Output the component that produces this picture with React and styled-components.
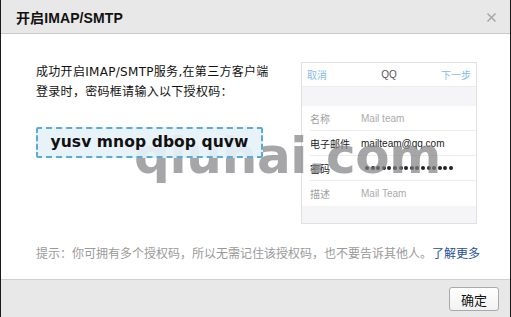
import React from "react";
import styled, { createGlobalStyle } from "styled-components";

const Global = createGlobalStyle`
  html, body { margin: 0; padding: 0; background: #fff; }
  * { box-sizing: border-box; }
  body { font-family: "DejaVu Sans", "Noto Sans CJK SC", sans-serif; }
`;

const Dialog = styled.div`
  position: relative;
  width: 511px;
  height: 317px;
  border-left: 1px solid #1a1a1a;
  border-right: 1px solid #1a1a1a;
  display: flex;
  flex-direction: column;
  background: #fff;
  overflow: hidden;
`;

const Header = styled.div`
  height: 34px;
  flex: none;
  background: #e8e8e8;
  border-bottom: 1px solid #c9c9c9;
  display: flex;
  align-items: center;
  justify-content: space-between;
  padding: 0 13px 0 15px;
`;

const Title = styled.div`
  font-family: "Liberation Sans", "Noto Sans CJK SC", sans-serif;
  font-weight: bold;
  font-size: 14px;
  color: #111;
  letter-spacing: 0.1px;
`;

const Close = styled.button`
  border: 0;
  background: none;
  padding: 0;
  width: 11px;
  height: 11px;
  display: flex;
  margin-top: 1px;
`;

const Body = styled.div`
  flex: 1;
  padding: 28px 32px 0 35px;
  display: flex;
  flex-direction: column;
`;

const Row = styled.div`
  display: flex;
  gap: 38px;
  align-items: flex-start;
`;

const LeftCol = styled.div`
  width: 227px;
  display: flex;
  flex-direction: column;
  gap: 25px;
`;

const Intro = styled.p`
  margin: 0;
  font-size: 12px;
  line-height: 20px;
  letter-spacing: 0.3px;
  color: #111;
  font-family: "DejaVu Sans", "Noto Sans CJK SC", sans-serif;
  white-space: nowrap;
`;

const CodeBox = styled.div`
  position: relative;
  z-index: 2;
  height: 31px;
  border: 2px dashed #58acd6;
  background: rgba(230, 241, 249, 0.92);
  border-radius: 2px;
  display: flex;
  align-items: center;
  justify-content: center;
  font-family: "DejaVu Sans", sans-serif;
  font-weight: bold;
  font-size: 15.5px;
  color: #111;
  letter-spacing: 0.1px;
  padding-bottom: 1px;
`;

const Phone = styled.div`
  width: 176px;
  height: 162px;
  border: 1px solid #e0e0e0;
  background: #f5f5f7;
  display: flex;
  flex-direction: column;
  font-family: "Liberation Sans", "Noto Sans CJK SC", sans-serif;
  font-size: 10px;
`;

const NavBar = styled.div`
  height: 24px;
  background: #fff;
  border-bottom: 1px solid #ececec;
  display: grid;
  grid-template-columns: 1fr auto 1fr;
  align-items: center;
  padding: 0 5px 0 5px;
`;

const NavLink = styled.span`
  color: #86bbe8;
  justify-self: ${(p) => (p.$end ? "end" : "start")};
`;

const NavTitle = styled.span`
  color: #555;
  font-size: 10px;
`;

const Band = styled.div`
  height: ${(p) => p.$h}px;
  background: #f5f5f7;
  flex: none;
`;

const List = styled.div`
  background: #fff;
  display: flex;
  flex-direction: column;
  padding-left: 8px;
`;

const Item = styled.div`
  height: 25px;
  display: flex;
  align-items: center;
  border-bottom: 1px solid #ececec;
  &:last-child { border-bottom: 0; }
`;

const Label = styled.span`
  width: 51px;
  flex: none;
  color: ${(p) => (p.$dark ? "#222" : "#a0a0a0")};
`;

const Value = styled.span`
  color: ${(p) => (p.$dark ? "#222" : "#ababab")};
  font-size: 10px;
`;

const Dots = styled.span`
  display: flex;
  gap: 1.6px;
  margin-left: 4px;
`;

const Dot = styled.i`
  width: 4px;
  height: 4px;
  border-radius: 50%;
  background: #222;
`;

const Tip = styled.p`
  margin: 21px 0 0 0;
  font-size: 12px;
  line-height: 18px;
  color: #9a9a9a;
  white-space: nowrap;
  font-family: "Liberation Sans", "Noto Sans CJK SC", sans-serif;
`;

const More = styled.a`
  color: #1f4f99;
  text-decoration: none;
`;

const Footer = styled.div`
  height: 38px;
  flex: none;
  background: #e8e8e8;
  border-top: 1px solid #cfcfcf;
  display: flex;
  justify-content: flex-end;
  padding: 7px 11px 0 0;
`;

const Button = styled.button`
  width: 50px;
  height: 24px;
  border: 1px solid #a9a9a9;
  border-radius: 3px;
  background: linear-gradient(#ffffff, #f2f2f2);
  font-family: "Liberation Sans", "Noto Sans CJK SC", sans-serif;
  font-size: 13px;
  color: #111;
  padding: 0;
`;

const Watermark = styled.div`
  position: absolute;
  z-index: 1;
  left: 133px;
  top: 131px;
  font-family: "DejaVu Sans", sans-serif;
  font-weight: bold;
  font-size: 50px;
  line-height: 50px;
  letter-spacing: -0.3px;
  color: rgba(128, 128, 132, 0.7);
  pointer-events: none;
  white-space: nowrap;
`;

const rows = [
  { label: "名称", value: "Mail team" },
  { label: "电子邮件", value: "mailteam@qq.com", dark: true },
  { label: "密码", dots: true, dark: true },
  { label: "描述", value: "Mail Team" },
];

export default function App() {
  return (
    <>
      <Global />
      <Dialog>
        <Header>
          <Title>开启IMAP/SMTP</Title>
          <Close aria-label="关闭">
            <svg width="11" height="11" viewBox="0 0 11 11">
              <path d="M1.5 1.5 L9.5 9.5 M9.5 1.5 L1.5 9.5" stroke="#a8a8a8" strokeWidth="1.6" />
            </svg>
          </Close>
        </Header>
        <Body>
          <Row>
            <LeftCol>
              <Intro>
                成功开启IMAP/SMTP服务,在第三方客户端
                <br />
                登录时，密码框请输入以下授权码：
              </Intro>
              <CodeBox>yusv mnop dbop quvw</CodeBox>
            </LeftCol>
            <Phone>
              <NavBar>
                <NavLink>取消</NavLink>
                <NavTitle>QQ</NavTitle>
                <NavLink $end>下一步</NavLink>
              </NavBar>
              <Band $h={19} />
              <List>
                {rows.map((r) => (
                  <Item key={r.label}>
                    <Label $dark={r.dark}>{r.label}</Label>
                    {r.dots ? (
                      <Dots aria-label="密码">
                        {Array.from({ length: 16 }, (_, i) => (
                          <Dot key={i} />
                        ))}
                      </Dots>
                    ) : (
                      <Value $dark={r.dark}>{r.value}</Value>
                    )}
                  </Item>
                ))}
              </List>
            </Phone>
          </Row>
          <Tip>
            提示：你可拥有多个授权码，所以无需记住该授权码，也不要告诉其他人。<More href="#">了解更多</More>
          </Tip>
        </Body>
        <Footer>
          <Button>确定</Button>
        </Footer>
        <Watermark>qiuhai.com</Watermark>
      </Dialog>
    </>
  );
}
